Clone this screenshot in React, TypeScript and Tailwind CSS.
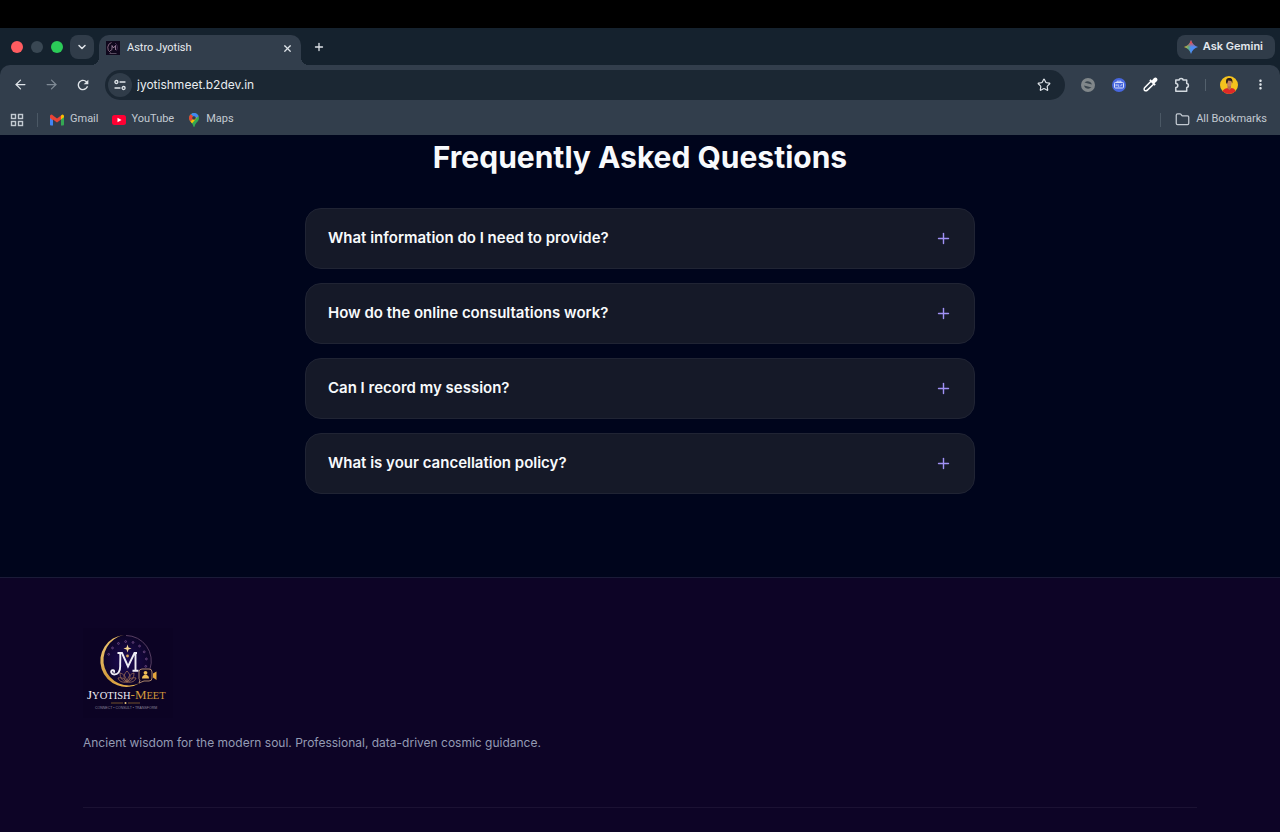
import React from "react";
import { Plus, ChevronDown, X, ArrowLeft, ArrowRight, Star, Folder } from "lucide-react";
import { MdRefresh, MdMoreVert } from "react-icons/md";

const questions = [
  "What information do I need to provide?",
  "How do the online consultations work?",
  "Can I record my session?",
  "What is your cancellation policy?",
];

function GmailIcon() {
  return (
    <svg width="14" height="12" viewBox="0 0 28 22" aria-hidden="true">
      <path d="M0 3v17a2 2 0 0 0 2 2h4V8z" fill="#4285f4" />
      <path d="M28 3v17a2 2 0 0 1-2 2h-4V8z" fill="#34a853" />
      <path d="M22 2v8l6-4.500V3a3 3 0 0 0-5-2.200z" fill="#fbbc04" />
      <path d="M6 10V2l8 6 8-6v8l-8 6z" fill="#ea4335" />
      <path d="M0 3v4l6 5V2L5 .8A3 3 0 0 0 0 3z" fill="#ea4335" />
    </svg>
  );
}

function YouTubeIcon() {
  return (
    <svg width="14" height="10" viewBox="0 0 28 20" aria-hidden="true">
      <rect width="28" height="20" rx="5" fill="#ff0033" />
      <path d="M11 5.500v9l8-4.500z" fill="#fff" />
    </svg>
  );
}

function MapsIcon() {
  return (
    <svg width="10" height="14" viewBox="0 0 20 28" aria-hidden="true">
      <clipPath id="pin">
        <path d="M10 0a10 10 0 0 0-10 10c0 7 7 9 8.500 16 .5 2.500 2.500 2.500 3 0C13 19 20 17 20 10A10 10 0 0 0 10 0z" />
      </clipPath>
      <g clipPath="url(#pin)">
        <rect width="20" height="28" fill="#34a853" />
        <path d="M-2 0h5l7 10-8 8h-4z" fill="#ea4335" />
        <path d="M10 10l-8 8 3 4L18 7z" fill="#fbbc04" />
        <path d="M6 0h14v6l-6 4-4-3-6-4z" fill="#4285f4" />
      </g>
      <circle cx="10" cy="10" r="3.600" fill="#323e4c" />
    </svg>
  );
}

function GeminiIcon() {
  return (
    <svg width="14" height="14" viewBox="0 0 28 28" aria-hidden="true">
      <defs>
        <linearGradient id="gem-base" x1="0" y1="0.500" x2="1" y2="0.500">
          <stop offset="0" stopColor="#f4c22b" />
          <stop offset="0.300" stopColor="#5fae7a" />
          <stop offset="0.500" stopColor="#4d8df6" />
          <stop offset="1" stopColor="#4a8cf7" />
        </linearGradient>
        <linearGradient id="gem-top" x1="0.500" y1="0" x2="0.500" y2="0.500">
          <stop offset="0" stopColor="#f0473c" />
          <stop offset="0.300" stopColor="#f0473c" />
          <stop offset="1" stopColor="#f0473c" stopOpacity="0" />
        </linearGradient>
      </defs>
      <path d="M14 0c2 7 7 12 14 14-7 2-12 7-14 14-2-7-7-12-14-14C7 12 12 7 14 0z" fill="url(#gem-base)" />
      <path d="M14 0c2 7 7 12 14 14-7 2-12 7-14 14-2-7-7-12-14-14C7 12 12 7 14 0z" fill="url(#gem-top)" />
    </svg>
  );
}

function AppsIcon() {
  return (
    <svg width="14" height="14" viewBox="0 0 14 14" fill="none" stroke="#c3cad2" strokeWidth="1.400" aria-hidden="true">
      <rect x="1.500" y="1.500" width="4" height="4" />
      <rect x="8.500" y="1.500" width="4" height="4" />
      <rect x="1.500" y="8.500" width="4" height="4" />
      <rect x="8.500" y="8.500" width="4" height="4" />
    </svg>
  );
}

function SiteControlsIcon() {
  return (
    <svg width="12" height="12" viewBox="0 0 12 12" fill="none" stroke="#dfe5ea" strokeWidth="1.300" strokeLinecap="round" aria-hidden="true">
      <circle cx="2.400" cy="3" r="1.500" />
      <path d="M6 3h5M1 9h5" />
      <circle cx="9.600" cy="9" r="1.500" />
    </svg>
  );
}

function BlockedIcon() {
  return (
    <svg width="16" height="16" viewBox="0 0 16 16" aria-hidden="true">
      <circle cx="8" cy="8" r="7" fill="#81878a" />
      <path d="M4.500 5.500C7 3.500 10.500 4 12 7.500L8 6.500zM11.500 10.500C9 12.500 5 12 4 8.500L8 9.500z" fill="#3b464f" />
    </svg>
  );
}

function RobotIcon() {
  return (
    <svg width="14" height="14" viewBox="0 0 14 14" aria-hidden="true">
      <circle cx="7" cy="7" r="7" fill="#4867e0" />
      <rect x="2.500" y="4.500" width="9" height="5.500" rx="0.800" fill="none" stroke="#d5defc" strokeWidth="1" />
      <path d="M5 4.200V3.200h4v1M4.200 6.200v2M6 6.200v2h1.200M8.500 8.200l1.500-2" fill="none" stroke="#d5defc" strokeWidth="0.900" />
    </svg>
  );
}

function DropperIcon() {
  return (
    <svg width="15" height="15" viewBox="0 0 15 15" aria-hidden="true">
      <path d="M8 4.200 1.800 10.600c-1 1-.8 3 .2 3.100.9.200 1.800 0 2.400-.6L10.800 7" fill="none" stroke="#fff" strokeWidth="1.500" />
      <path d="M6.300 3.400l1.200-1.100 1.400 1.200L10.800 1.300c1-1 2.500-.8 3.100-.1.800.8.800 2.100-.1 3l-2.200 2.100 1.100 1.300-1.100 1.200z" fill="#fff" />
    </svg>
  );
}

function ExtensionsIcon() {
  return (
    <svg width="16" height="16" viewBox="0 0 16 16" fill="none" stroke="#d3d9df" strokeWidth="1.500" strokeLinejoin="round" aria-hidden="true">
      <path d="M1.800 3h3.400a1.900 1.600 0 0 1 3.800 0h3.700v3.600a1.700 1.900 0 0 1 0 3.800v3.800H1.800v-3.600a2 2 0 0 0 0-4z" />
    </svg>
  );
}

function ProfilePicture() {
  return (
    <svg width="18" height="18" viewBox="0 0 36 36" aria-hidden="true">
      <clipPath id="face">
        <circle cx="18" cy="18" r="18" />
      </clipPath>
      <g clipPath="url(#face)">
        <rect width="36" height="36" fill="#f5c31d" />
        <path d="M4 36c0-8 5-11 12-12l4 2 3-2c6 1 9 4 9 12z" fill="#df2927" />
        <path d="M15 18h7v7l-3 3-4-3z" fill="#b9714e" />
        <ellipse cx="18.500" cy="14.500" rx="4.500" ry="6.500" fill="#c98660" />
        <path d="M12.500 15C11 6 14 4 19 4s7 4 5.500 11l-2-5-6-1-2 6z" fill="#30201d" />
      </g>
    </svg>
  );
}

function Favicon() {
  return (
    <svg width="14" height="14" viewBox="0 0 28 28" aria-hidden="true">
      <rect width="28" height="28" fill="#10081d" />
      <path d="M11 3a11 11 0 0 0-2 20" fill="none" stroke="#9c7890" strokeWidth="1.600" />
      <path d="M18 4a11 11 0 0 1 3 15" fill="none" stroke="#5c3d6b" strokeWidth="1.400" />
      <path d="M8 19c4 1 4-3 4-10l3 5 4-5v9" fill="none" stroke="#b797b5" strokeWidth="1.500" />
      <path d="M7 25h14" stroke="#6e6075" strokeWidth="1.500" />
    </svg>
  );
}

function BrandLogo() {
  const marks = [200, 222, 244, 266, 288, 310, 332, 354, 376];
  return (
    <svg width="90" height="90" viewBox="0 0 90 90" role="img" aria-label="Jyotish-Meet">
      <defs>
        <linearGradient id="gold" x1="0" y1="0" x2="1" y2="1">
          <stop offset="0" stopColor="#f2cf7e" />
          <stop offset="0.500" stopColor="#d29a3c" />
          <stop offset="1" stopColor="#f0bd55" />
        </linearGradient>
        <radialGradient id="sky">
          <stop offset="0" stopColor="#1d0b55" />
          <stop offset="1" stopColor="#0d0428" />
        </radialGradient>
      </defs>
      <rect width="90" height="90" fill="#0c0324" />
      <circle cx="43" cy="33" r="25" fill="url(#sky)" />
      <path d="M43 7.500A25.500 25.500 0 0 1 67 41" fill="none" stroke="#60456a" strokeWidth="0.900" />
      <path d="M41 7A26 26 0 1 0 57 55A25.500 25.500 0 1 1 41 7z" fill="url(#gold)" />
      {marks.map((deg) => {
        const a = (deg * Math.PI) / 180;
        return (
          <circle
            key={deg}
            cx={44 + 19.5 * Math.cos(a)}
            cy={33 + 19.5 * Math.sin(a)}
            r="0.900"
            fill="none"
            stroke="#76518a"
            strokeWidth="0.800"
          />
        );
      })}
      <path d="M44.500 16.500l1 3 3 1-3 1-1 3-1-3-3-1 3-1z" fill="#f5d794" />
      <circle cx="44.500" cy="28" r="1.400" fill="#d8a552" />
      <path d="M37 25c.8 3 0 8 .2 13 .2 6-2.500 8.500-6 8.500-3 0-4-3.500-1.700-4.300 1.600-.5 2.400 1.600 1 2.300" fill="none" stroke="#efedf5" strokeWidth="1.900" />
      <path d="M34.500 25H39l6 13.500L51.500 25H54M52.500 25.500v17.500M49.500 42.800H55.500" fill="none" stroke="#efedf5" strokeWidth="1.900" />
      <g fill="none" stroke="#9a6c55" strokeWidth="0.800">
        <path d="M44 43c-4 4-4 8 0 11 4-3 4-7 0-11z" />
        <path d="M44 54c-5-1-7-4-7-9 4 1 6 4 7 9zM44 54c5-1 7-4 7-9-4 1-6 4-7 9z" />
        <path d="M44 54c-5 1-8-1-9-4 4-1 7 1 9 4zM44 54c5 1 8-1 9-4-4-1-7 1-9 4z" />
      </g>
      <path d="M59 41h7a3 3 0 0 1 3 3v6a3 3 0 0 1-3 3h-5l-5 2 1-3c-1-.5-1-1-1-2v-6a3 3 0 0 1 3-3z" fill="#120624" stroke="#b99172" strokeWidth="0.900" />
      <circle cx="62.500" cy="44.800" r="1.900" fill="#f0bd55" />
      <path d="M59 50.500c0-5 7-5 7 0z" fill="#f0bd55" />
      <path d="M70 45.500l3.500-2v8.500l-3.500-2.500z" fill="#e5a63c" />
      <text x="4" y="71" fontFamily="Liberation Serif, serif" fontSize="13" fill="#efedf5">
        J<tspan fontSize="10.500">YOTISH</tspan>
        <tspan fill="#d29a3c">-M</tspan>
        <tspan fontSize="10.500" fill="#d29a3c">EET</tspan>
      </text>
      <path d="M28 75h12M45 75h12" stroke="#8c642f" strokeWidth="0.800" />
      <circle cx="42.500" cy="75" r="1" fill="#e9c67c" />
      <text x="12" y="81" fontFamily="Liberation Sans, sans-serif" fontSize="3.500" fill="#8a859c">
        CONNECT • CONSULT • TRANSFORM
      </text>
    </svg>
  );
}

function BrowserChrome() {
  return (
    <header className="bg-[#15222e] text-[#dfe4e9]">
      <div className="h-7 bg-black" />
      <div className="flex h-[37px] items-center pr-[5px] pl-[11px]">
        <div className="flex gap-2">
          <span className="size-3 rounded-full bg-[#ff5c60]" />
          <span className="size-3 rounded-full bg-[#394753]" />
          <span className="size-3 rounded-full bg-[#2bcb58]" />
        </div>
        <button aria-label="Search tabs" className="ml-[7px] flex size-6 items-center justify-center rounded-lg bg-[#303c49]">
          <ChevronDown size={12} strokeWidth={3} />
        </button>
        <div className="relative ml-[5px] flex h-[30px] w-[202px] items-center self-end rounded-t-[10px] bg-[#323e4c] pr-2 pb-1 pl-[7px]">
          <span className="absolute right-full bottom-0 size-2 bg-[radial-gradient(circle_at_0_0,transparent_8px,#323e4c_8px)]" />
          <span className="absolute bottom-0 left-full size-2 bg-[radial-gradient(circle_at_100%_0,transparent_8px,#323e4c_8px)]" />
          <Favicon />
          <span className="ml-[7px] flex-1 font-[Roboto,sans-serif] text-[11px] text-[#e8ecf0]">Astro Jyotish</span>
          <button aria-label="Close tab">
            <X size={11} strokeWidth={2.6} />
          </button>
        </div>
        <button aria-label="New tab" className="ml-3">
          <Plus size={12} strokeWidth={2.6} />
        </button>
        <button className="ml-auto flex h-6 items-center gap-[5px] rounded-lg bg-[#303c49] pr-[12px] pl-[7px] text-[11px] font-semibold text-[#e4e9ee]">
          <GeminiIcon />
          Ask Gemini
        </button>
      </div>
      <div className="rounded-t-[10px] bg-[#323e4c]">
        <div className="flex h-[39px] items-center pr-3 pl-[13px]">
          <button aria-label="Back">
            <ArrowLeft size={15} strokeWidth={2} />
          </button>
          <button aria-label="Forward" className="ml-4 text-[#7f8a95]">
            <ArrowRight size={15} strokeWidth={2} />
          </button>
          <button aria-label="Reload" className="ml-4">
            <MdRefresh size={16} />
          </button>
          <div className="ml-[14px] flex h-[30px] flex-1 items-center rounded-full bg-[#1b2733] pr-[14px] pl-[3px]">
            <button aria-label="View site information" className="flex size-6 items-center justify-center rounded-full bg-[#303c49]">
              <SiteControlsIcon />
            </button>
            <input
              aria-label="Address"
              defaultValue="jyotishmeet.b2dev.in"
              className="ml-[5px] min-w-0 flex-1 bg-transparent text-[12px] text-[#e8ecf0] outline-none"
            />
            <button aria-label="Bookmark this page">
              <Star size={14} strokeWidth={2} />
            </button>
          </div>
          <div className="ml-[15px] flex items-center gap-4">
            <button aria-label="Content blocker">
              <BlockedIcon />
            </button>
            <button aria-label="Assistant">
              <RobotIcon />
            </button>
            <button aria-label="Colour picker" className="ml-px">
              <DropperIcon />
            </button>
            <button aria-label="Extensions">
              <ExtensionsIcon />
            </button>
          </div>
          <span className="ml-[15px] h-3 w-px bg-[#53606c]" />
          <button aria-label="Profile" className="ml-[14px]">
            <ProfilePicture />
          </button>
          <button aria-label="Menu" className="ml-[15px]">
            <MdMoreVert size={15} />
          </button>
        </div>
        <nav aria-label="Bookmarks" className="flex h-[31px] items-center pr-[13px] pl-[10px] font-[Roboto,sans-serif] text-[11px] text-[#c3cad2]">
          <button aria-label="Apps">
            <AppsIcon />
          </button>
          <span className="ml-[13px] h-[14px] w-px bg-[#4b5865]" />
          <a href="#gmail" className="ml-3 flex items-center gap-[6px]">
            <GmailIcon />
            Gmail
          </a>
          <a href="#youtube" className="ml-[14px] flex items-center gap-[5px]">
            <YouTubeIcon />
            YouTube
          </a>
          <a href="#maps" className="ml-[15px] flex items-center gap-[7px]">
            <MapsIcon />
            Maps
          </a>
          <span className="ml-auto h-[14px] w-px bg-[#4b5865]" />
          <button className="ml-[14px] flex items-center gap-[6px]">
            <Folder size={15} strokeWidth={2} />
            All Bookmarks
          </button>
        </nav>
      </div>
    </header>
  );
}

export default function App() {
  return (
    <div className="flex min-h-screen flex-col bg-[#00051c] font-[Inter,sans-serif]">
      <BrowserChrome />
      <main className="px-6 pt-1 pb-[83px]">
        <h1 className="text-center text-[30px] leading-9 font-bold text-[#f8fafc]">
          Frequently Asked Questions
        </h1>
        <div className="mx-auto mt-[33px] flex max-w-[670px] flex-col gap-[14px]">
          {questions.map((question) => (
            <button
              key={question}
              className="flex h-[61px] items-center justify-between rounded-2xl border border-[#202434] bg-[#151928] px-[22px] text-left text-[15px] font-semibold text-[#f8fafc]"
            >
              {question}
              <Plus size={17} strokeWidth={2} className="text-[#a091f5]" />
            </button>
          ))}
        </div>
      </main>
      <footer className="flex-1 border-t border-[#1b1b38] bg-[#0d0426] px-[83px]">
        <div className="pt-[50px]">
          <BrandLogo />
          <p className="mt-[15px] text-[12px] leading-5 text-[#949bb4]">
            Ancient wisdom for the modern soul. Professional, data-driven cosmic guidance.
          </p>
        </div>
        <div className="mt-[54px] border-t border-[#1b1233]" />
      </footer>
    </div>
  );
}
